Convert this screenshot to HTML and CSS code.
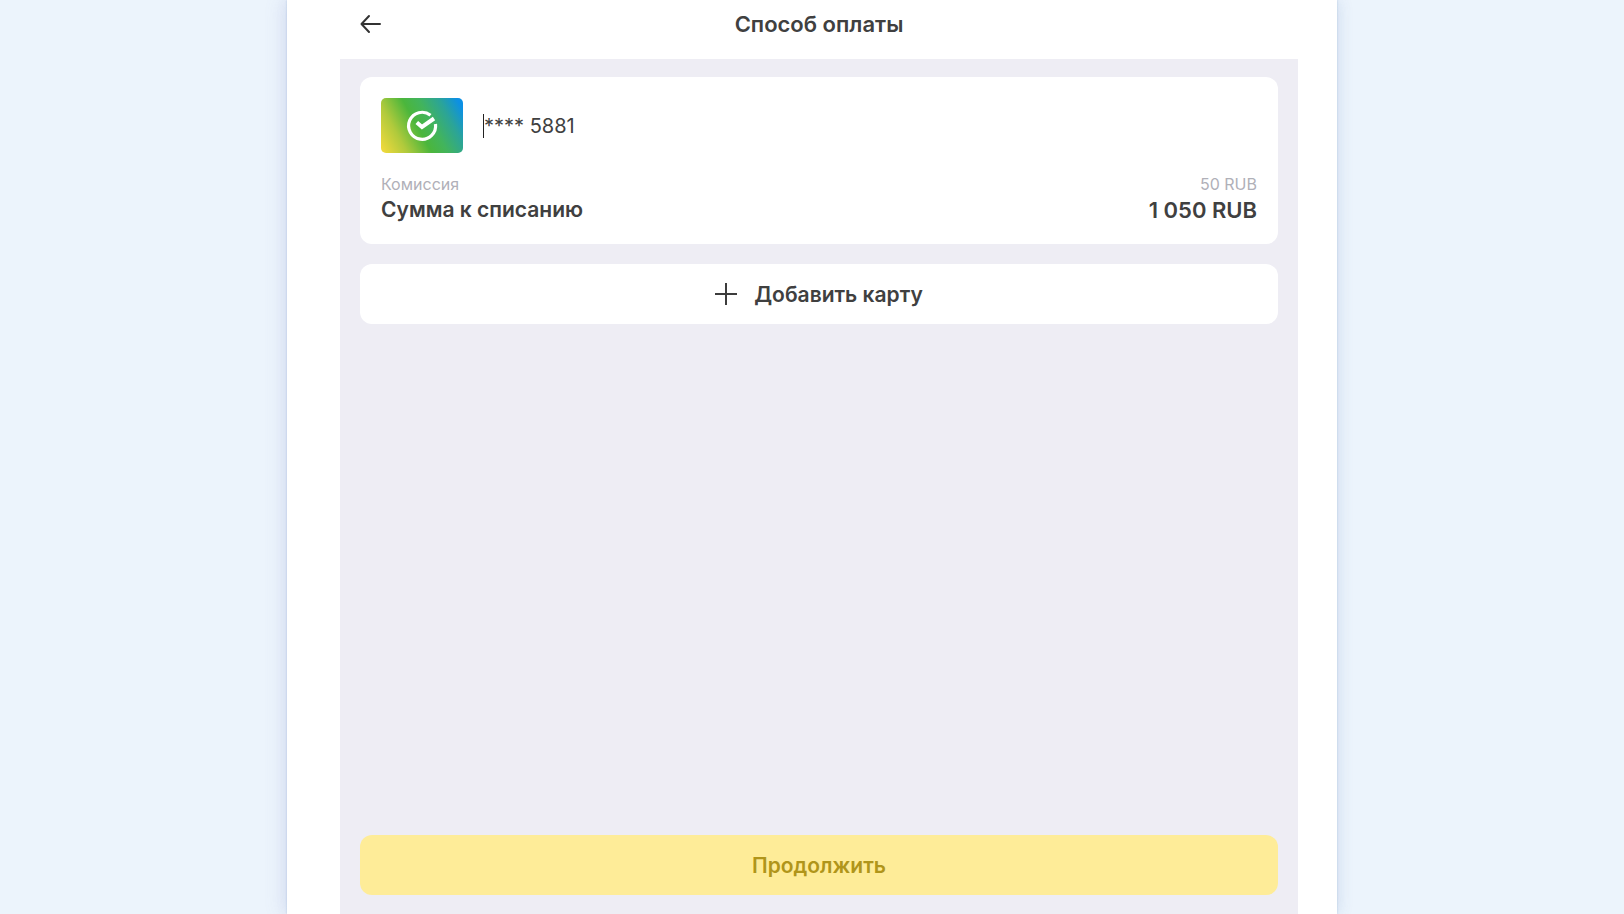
FILE: index.html
```html
<!DOCTYPE html>
<html lang="ru">
<head>
  <meta charset="UTF-8" />
  <meta name="viewport" content="width=device-width, initial-scale=1.0"/>
  <title>Способ оплаты</title>
  <link rel="stylesheet" href="styles.css">
</head>
<body>
  <div class="sheet">
    <header class="header">
      <button type="button" class="back" aria-label="Назад">
        <svg width="22" height="20" viewBox="0 0 22 20" fill="none" stroke="#333" stroke-width="2" stroke-linecap="round" stroke-linejoin="round">
          <path d="M21 10H3M10 2L2.500 10L10 18"/>
        </svg>
      </button>
      <h1>Способ оплаты</h1>
    </header>

    <main class="content">
      <section class="card">
        <div class="card-source">
          <svg class="card-logo" width="82" height="55" viewBox="0 0 82 55">
            <defs>
              <linearGradient id="bank" gradientUnits="userSpaceOnUse" x1="2" y1="51" x2="80" y2="8">
                <stop offset="0" stop-color="#ecd83c"/>
                <stop offset="0.220" stop-color="#b0ca3c"/>
                <stop offset="0.460" stop-color="#4bb63c"/>
                <stop offset="0.620" stop-color="#42b45c"/>
                <stop offset="0.820" stop-color="#2ba498"/>
                <stop offset="1" stop-color="#0c90e4"/>
              </linearGradient>
            </defs>
            <rect width="82" height="55" rx="5" fill="url(#bank)"/>
            <path d="M49.500 17.200A13.500 13.500 0 1 0 54.500 26" fill="none" stroke="#fff" stroke-width="3.200"/>
            <path d="M35.800 24.500L41 29L53 20.500" fill="none" stroke="#fff" stroke-width="4"/>
          </svg>
          <span class="card-number">**** 5881</span>
        </div>
        <dl class="totals">
          <div class="row fee">
            <dt>Комиссия</dt>
            <dd>50 RUB</dd>
          </div>
          <div class="row total">
            <dt>Сумма к списанию</dt>
            <dd>1 050 RUB</dd>
          </div>
        </dl>
      </section>

      <button type="button" class="add-card">
        <svg width="22" height="22" viewBox="0 0 22 22" stroke="#3c3c3c" stroke-width="2">
          <path d="M11 0V22M0 11H22"/>
        </svg>
        Добавить карту
      </button>

      <button type="submit" class="submit">Продолжить</button>
    </main>
  </div>
</body>
</html>
```

FILE: styles.css
```css
* {
  box-sizing: border-box;
}
body {
  margin: 0;
  background: #ecf4fc;
  font-family: Inter, "Liberation Sans", sans-serif;
  font-size: 20px;
  color: #404040;
}
.sheet {
  display: flex;
  flex-direction: column;
  max-width: 1050px;
  min-height: 100vh;
  margin: 0 auto;
  padding: 0 39px 0 53px;
  background: #fff;
  box-shadow: -4px 0 18px rgba(120, 120, 190, 0.16), 3px 0 14px rgba(90, 150, 190, 0.1), 0 0 2px rgba(90, 130, 180, 0.3);
}
.header {
  display: grid;
  grid-template-columns: 60px 1fr 60px;
  align-items: center;
  height: 59px;
  padding-bottom: 12px;
}
.header h1 {
  margin: 0;
  font-size: 22px;
  font-weight: 600;
  line-height: 26px;
  text-align: center;
}
button {
  border: none;
  font: inherit;
  color: inherit;
  cursor: pointer;
}
.back {
  display: flex;
  justify-content: center;
  padding: 0;
  background: none;
}
.content {
  flex: 1;
  display: flex;
  flex-direction: column;
  gap: 20px;
  padding: 18px 20px 19px;
  background: #eeedf4;
}
.card {
  padding: 21px 21px 19px;
  border-radius: 12px;
  background: #fff;
}
.card-source {
  display: flex;
  align-items: center;
  gap: 20px;
}
.card-number {
  border-left: 1px solid #222;
  line-height: 24px;
}
.totals {
  margin: 20px 0 0;
}
.row {
  display: flex;
  justify-content: space-between;
}
.row dd {
  margin: 0;
}
.fee {
  font-size: 16px;
  line-height: 22px;
  color: #b0b0b8;
}
.total {
  font-size: 21px;
  font-weight: 600;
  line-height: 30px;
}
.total dd {
  font-size: 22px;
}
.add-card,
.submit {
  display: flex;
  align-items: center;
  justify-content: center;
  height: 60px;
  border-radius: 12px;
  font-size: 21px;
  font-weight: 600;
}
.add-card {
  gap: 17px;
  background: #fff;
}
.submit {
  margin-top: auto;
  background: #feec98;
  color: #b0951a;
}
```
